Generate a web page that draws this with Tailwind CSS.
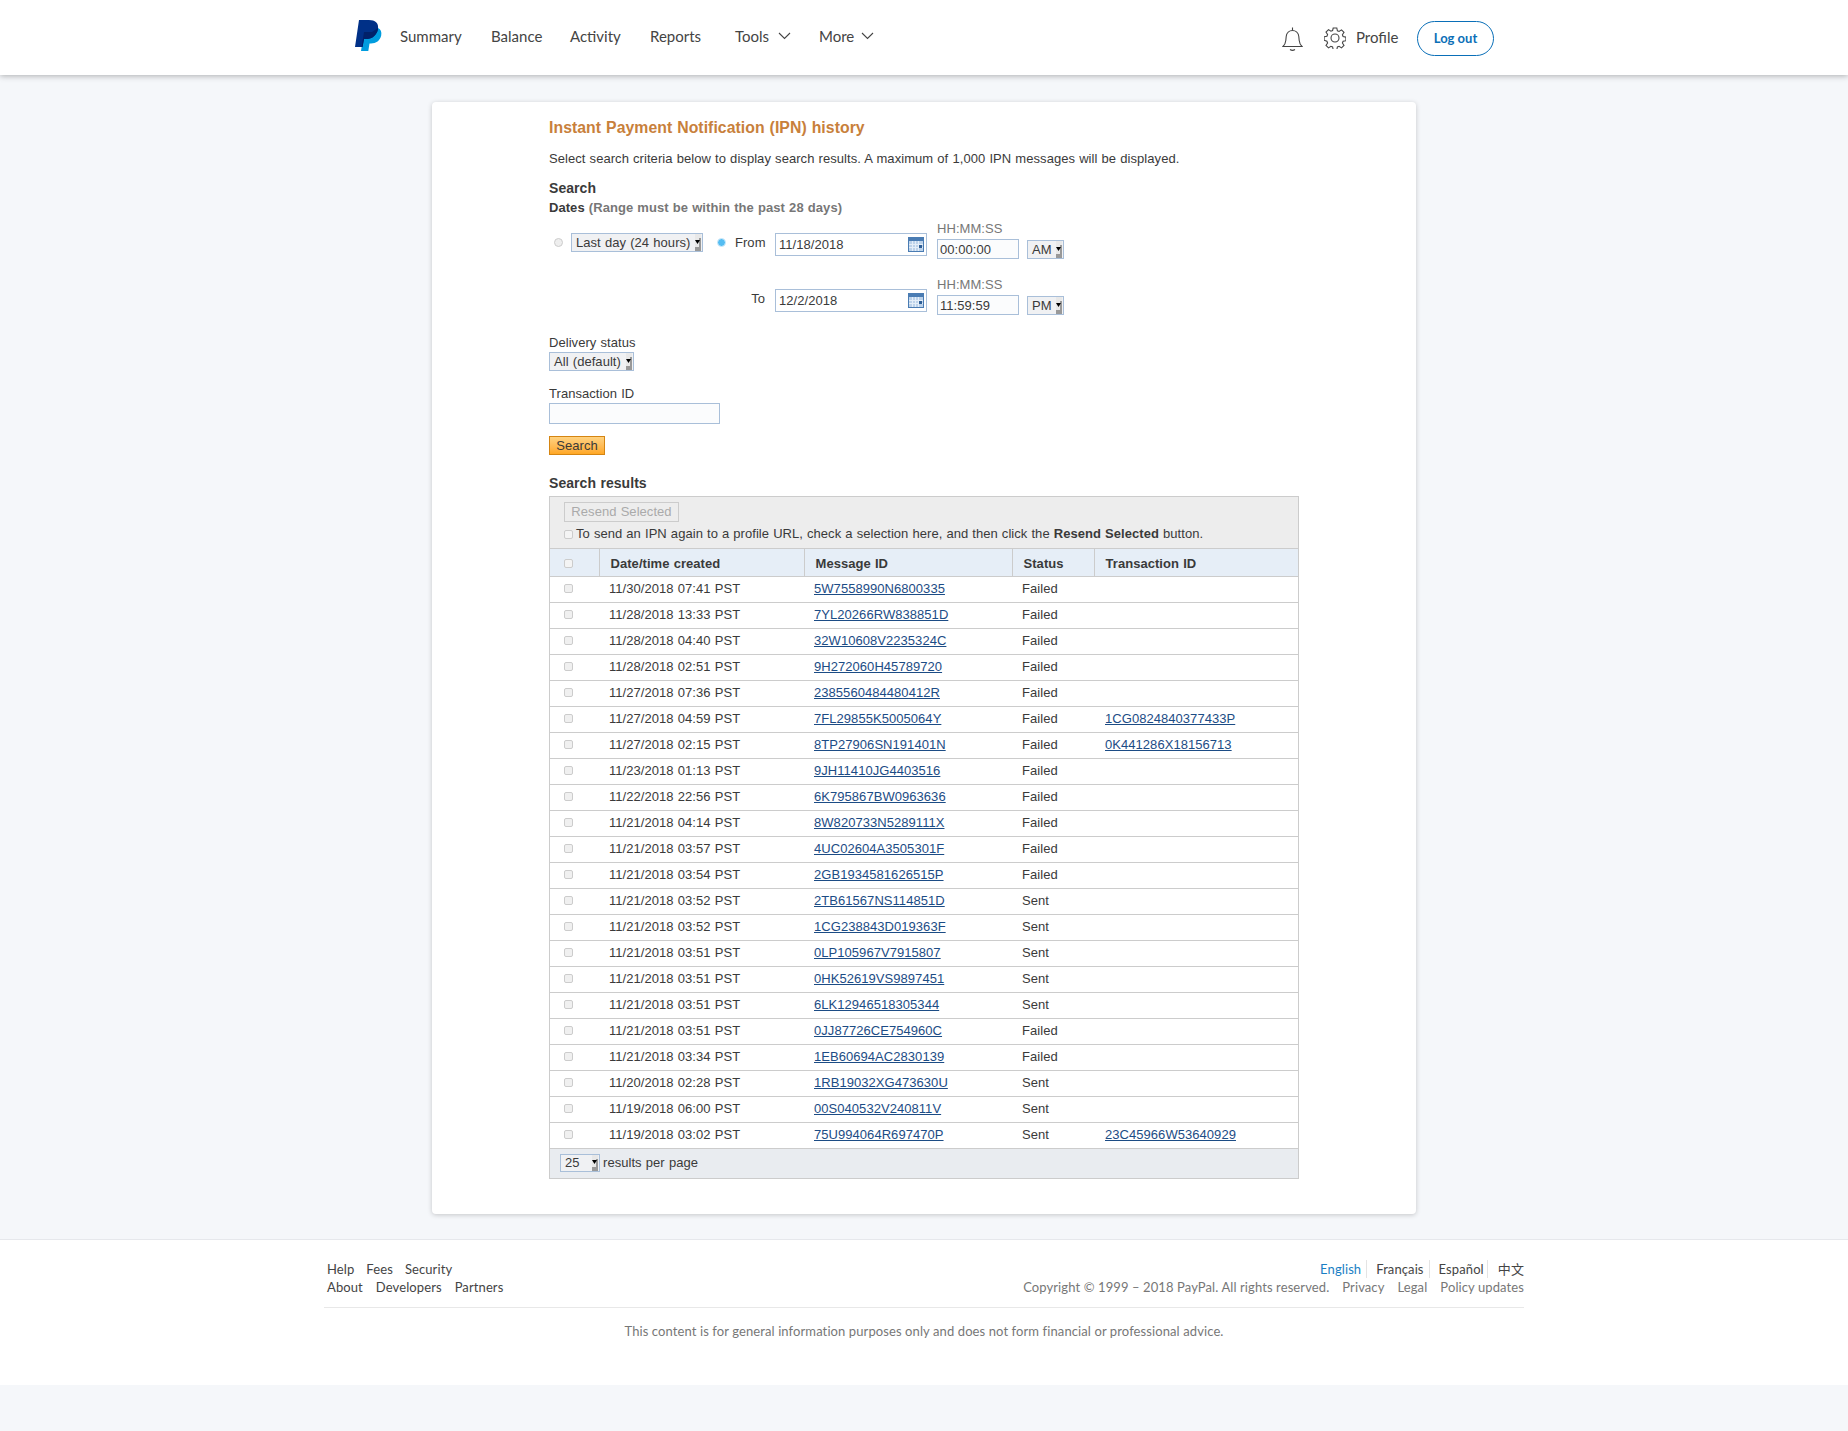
<!DOCTYPE html>
<html lang="en">
<head>
    <meta charset="UTF-8">
    <meta name="viewport" content="width=device-width, initial-scale=1.0">
    <title>Instant Payment Notification (IPN) history</title>
    <script src="https://cdn.jsdelivr.net/npm/@tailwindcss/browser@4"></script>
</head>
<body class="bg-[#f5f7fa] font-['Liberation_Sans',Arial,sans-serif] text-[13px] text-[#3a3a3a] tracking-[0.05px] [word-spacing:0.5px]">
    <!-- top nav -->
    <header class="h-[75px] bg-white shadow-[0_1px_6px_rgba(0,0,0,0.3)] relative font-['Lato',sans-serif] tracking-normal [word-spacing:0]">
        <div class="w-[1200px] mx-auto h-full flex items-center text-[15px] leading-5 text-[#444]">
            <svg class="ml-[31px] mb-[5px] w-[27px] h-[31px]" viewBox="0 0 27 31">
                <defs><clipPath id="pp"><path d="M4 0H14C20 0 24 3 23 9C22 15 17 19 12 19H9L7.5 27H0Z"/></clipPath></defs>
                <path fill="#009cde" d="M23 8C26 9.500 26.800 12 26.200 15.500C25.200 20.500 21 23.500 16 23.500H14.500L13.300 31H6L9 12H17Z"/>
                <path fill="#003087" d="M4 0H14C20 0 24 3 23 9C22 15 17 19 12 19H9L7.500 27H0Z"/>
                <path fill="#012169" clip-path="url(#pp)" d="M23 8C26 9.500 26.800 12 26.200 15.500C25.200 20.500 21 23.500 16 23.500H14.500L13.300 31H6L9 12H17Z"/>
            </svg>
            <nav class="flex items-center ml-[18px] mb-[4px]">
                <a class="w-[91px]">Summary</a>
                <a class="w-[79px]">Balance</a>
                <a class="w-[80px]">Activity</a>
                <a class="w-[85px]">Reports</a>
                <a class="w-[84px] flex items-center"><span class="w-[43px]">Tools</span>
                    <svg class="w-[13px] h-[8px]" viewBox="0 0 13 8" fill="none" stroke="#444" stroke-width="1.100"><path d="M1 1l5.500 5.500L12 1"/></svg>
                </a>
                <a class="flex items-center"><span class="w-[42px]">More</span>
                    <svg class="w-[13px] h-[8px]" viewBox="0 0 13 8" fill="none" stroke="#444" stroke-width="1.100"><path d="M1 1l5.500 5.500L12 1"/></svg>
                </a>
            </nav>
            <div class="ml-auto flex items-center mr-[30px]">
                <svg class="w-[21px] h-[24px] mt-[2px]" viewBox="0 0 21 24" fill="none" stroke="#444" stroke-width="1.100">
                    <path d="M10.500 0.500V3M1 19.500c1.500-1.500 2.500-3 2.800-6l.4-4c.4-3.500 3-6 6.300-6s5.900 2.500 6.300 6l.4 4c.3 3 1.300 4.500 2.800 6z"/>
                    <path d="M8 22.500c1.500 1 3.500 1 5 0"/>
                </svg>
                <svg class="ml-[21px] w-[22px] h-[22px]" viewBox="0 0 22 22" fill="none" stroke="#444" stroke-width="1.100">
                    <circle cx="11" cy="11" r="4"/>
                    <path d="M9.200 1h3.600l.6 2.800 1.700.7 2.400-1.600 2.500 2.500-1.600 2.400.7 1.700 2.800.6v3.600l-2.800.6-.7 1.700 1.600 2.400-2.500 2.500-2.400-1.600-1.700.7-.6 2.800H9.200l-.6-2.800-1.700-.7-2.400 1.600-2.500-2.500 1.600-2.400-.7-1.700L.1 13.200V9.800l2.800-.6.700-1.700L2 5.100l2.500-2.500 2.400 1.600 1.700-.7z"/>
                </svg>
                <a class="ml-[10px] w-[44px] mb-[2px]">Profile</a>
                <a class="ml-[17px] w-[77px] h-[35px] pb-[1px] rounded-full border border-[#0a6fb8] text-[#0b6fb7] text-[13px] font-bold flex items-center justify-center mt-[2px]">Log out</a>
            </div>
        </div>
    </header>

    <main class="w-[984px] mx-auto mt-[27px] bg-white rounded-[4px] shadow-[0_1px_5px_rgba(0,0,0,0.2)] pl-[117px] pt-[16px] pb-[35px]">
        <div class="w-[750px]">
            <h1 class="text-[15.800px] leading-5 font-bold text-[#c8803b]">Instant Payment Notification (IPN) history</h1>
            <p class="mt-[13px] leading-4">Select search criteria below to display search results. A maximum of 1,000 IPN messages will be displayed.</p>
            <h2 class="mt-[13px] text-[14px] leading-4 font-bold">Search</h2>
            <p class="mt-[4px] leading-4 font-bold">Dates <span class="text-[#777]">(Range must be within the past 28 days)</span></p>

            <!-- from row -->
            <div class="mt-[6px] flex items-start">
                <div class="w-[217px] mt-[11px] flex items-center">
                    <span class="ml-[5px] w-[9px] h-[9px] rounded-full border border-[#ccc] bg-[#eee]"></span>
                    <div class="ml-[8px] w-[132px] h-[19px] pl-[4px] pr-[1px] flex items-center justify-between border border-[#a9bfd9] bg-[#f0f1f3]">
                        <span>Last day (24 hours)</span>
                        <svg class="w-[6px] h-[17px]" viewBox="0 0 6 17"><rect width="6" height="17" fill="#e8e8e8"/><rect x="4" y="4" width="2" height="13" fill="#999"/><rect y="13" width="6" height="4" fill="#999"/><path d="M0 6h5L2.500 10z" fill="#000"/></svg>
                    </div>
                    <span class="ml-[14px] w-[9px] h-[9px] rounded-full bg-[#55bdf2] border border-[#d3ecfb]"></span>
                    <span class="ml-[9px]">From</span>
                </div>
                <div class="ml-[9px] mt-[11px] w-[152px] h-[23px] pl-[3px] pr-[2px] flex items-center justify-between border border-[#a9bfd9] bg-white">
                    <span class="mt-[1px]">11/18/2018</span>
                    <svg class="w-[16px] h-[15px]" viewBox="0 0 16 15"><rect width="16" height="15" fill="#4a7cb3"/><rect x="1" y="4" width="14" height="10" fill="#bcd2ea"/><path d="M1 7.500h14M1 10.500h14M4.500 4v10M7.500 4v10M10.500 4v10" stroke="#e4eef8"/><rect x="11" y="8" width="3" height="3" fill="#2f5f96"/></svg>
                </div>
                <div class="ml-[10px] w-[82px]">
                    <div class="leading-[14px] text-[#777]">HH:MM:SS</div>
                    <div class="mt-[3px] h-[20px] pl-[2px] pt-[1px] flex items-center border border-[#a9bfd9] bg-[#fbfcfd]">00:00:00</div>
                </div>
                <div class="ml-[8px] mt-[18px] w-[37px] h-[19px] pl-[4px] pr-[1px] flex items-center justify-between border border-[#a9bfd9] bg-[#f0f1f3]">
                    <span>AM</span>
                    <svg class="w-[6px] h-[17px]" viewBox="0 0 6 17"><rect width="6" height="17" fill="#e8e8e8"/><rect x="4" y="4" width="2" height="13" fill="#999"/><rect y="13" width="6" height="4" fill="#999"/><path d="M0 6h5L2.500 10z" fill="#000"/></svg>
                </div>
            </div>

            <!-- to row -->
            <div class="mt-[19px] flex items-start">
                <div class="w-[216px] mr-[1px] mt-[11px] h-[19px] leading-[19px] text-right">To</div>
                <div class="ml-[9px] mt-[11px] w-[152px] h-[23px] pl-[3px] pr-[2px] flex items-center justify-between border border-[#a9bfd9] bg-white">
                    <span class="mt-[1px]">12/2/2018</span>
                    <svg class="w-[16px] h-[15px]" viewBox="0 0 16 15"><rect width="16" height="15" fill="#4a7cb3"/><rect x="1" y="4" width="14" height="10" fill="#bcd2ea"/><path d="M1 7.500h14M1 10.500h14M4.500 4v10M7.500 4v10M10.500 4v10" stroke="#e4eef8"/><rect x="11" y="8" width="3" height="3" fill="#2f5f96"/></svg>
                </div>
                <div class="ml-[10px] w-[82px]">
                    <div class="leading-[14px] text-[#777]">HH:MM:SS</div>
                    <div class="mt-[3px] h-[20px] pl-[2px] pt-[1px] flex items-center border border-[#a9bfd9] bg-[#fbfcfd]">11:59:59</div>
                </div>
                <div class="ml-[8px] mt-[18px] w-[37px] h-[19px] pl-[4px] pr-[1px] flex items-center justify-between border border-[#a9bfd9] bg-[#f0f1f3]">
                    <span>PM</span>
                    <svg class="w-[6px] h-[17px]" viewBox="0 0 6 17"><rect width="6" height="17" fill="#e8e8e8"/><rect x="4" y="4" width="2" height="13" fill="#999"/><rect y="13" width="6" height="4" fill="#999"/><path d="M0 6h5L2.500 10z" fill="#000"/></svg>
                </div>
            </div>

            <div class="mt-[20px] leading-4">Delivery status</div>
            <div class="mt-[1px] w-[85px] h-[19px] pl-[4px] pr-[1px] flex items-center justify-between border border-[#a9bfd9] bg-[#f0f1f3]">
                <span>All (default)</span>
                <svg class="w-[6px] h-[17px]" viewBox="0 0 6 17"><rect width="6" height="17" fill="#e8e8e8"/><rect x="4" y="4" width="2" height="13" fill="#999"/><rect y="13" width="6" height="4" fill="#999"/><path d="M0 6h5L2.500 10z" fill="#000"/></svg>
            </div>

            <div class="mt-[15px] leading-4">Transaction ID</div>
            <div class="mt-[1px] w-[171px] h-[21px] border border-[#a9bfd9] bg-[#fbfcfd]"></div>

            <button class="mt-[12px] block w-[56px] h-[19px] border border-[#d58512] bg-gradient-to-b from-[#ffd27f] to-[#ffa822] text-center leading-[17px]">Search</button>

            <h2 class="mt-[20px] text-[14px] leading-4 font-bold">Search results</h2>

            <!-- results -->
            <div class="mt-[5px] border border-[#ccc]">
                <div class="h-[52px] bg-[#ededed] border-b border-[#ccc] pl-[14px] pt-[5px]">
                    <div class="w-[115px] h-[20px] border border-[#ccc] text-[#aaa] text-center leading-[18px]">Resend Selected</div>
                    <div class="mt-[4px] flex items-center h-[16px]">
                        <span class="w-[9px] h-[9px] rounded-[2px] border border-[#ccc] bg-[#f4f4f4]"></span>
                        <span class="ml-[3px] [word-spacing:0.4px]">To send an IPN again to a profile URL, check a selection here, and then click the <b>Resend Selected</b> button.</span>
                    </div>
                </div>
                <table class="w-[748px] table-fixed border-collapse">
                    <colgroup><col class="w-[49px]"><col class="w-[205px]"><col class="w-[208px]"><col class="w-[82px]"><col class="w-[204px]"></colgroup>
                    <thead class="bg-[#e6eef7] font-bold text-left">
                        <tr class="h-[27px] border-b border-[#ccc] [&>th]:pl-[11px] [&>th]:pt-[3px] [&>th:not(:first-child)]:border-l [&>th]:border-[#ccc] [&>th:last-child]:border-r">
                            <th><span class="block ml-[3px] w-[9px] h-[9px] rounded-[2px] border border-[#ccc] bg-[#f4f4f4]"></span></th>
                            <th>Date/time created</th>
                            <th>Message ID</th>
                            <th>Status</th>
                            <th>Transaction ID</th>
                        </tr>
                    </thead>
                    <tbody class="[&_tr]:h-[26px] [&_tr]:border-b [&_tr]:border-[#ccc] [&_td]:pl-[10px] [&_td:last-child]:pl-[11px] [&_a]:text-[#1c4c85] [&_a]:underline [&_i]:block [&_i]:ml-[4px] [&_i]:mb-[1px] [&_i]:w-[9px] [&_i]:h-[9px] [&_i]:rounded-[2px] [&_i]:border [&_i]:border-[#ccc] [&_i]:bg-[#f0f0f0]">
                        <tr><td><i></i></td><td>11/30/2018 07:41 PST</td><td><a>5W7558990N6800335</a></td><td>Failed</td><td></td></tr>
                        <tr><td><i></i></td><td>11/28/2018 13:33 PST</td><td><a>7YL20266RW838851D</a></td><td>Failed</td><td></td></tr>
                        <tr><td><i></i></td><td>11/28/2018 04:40 PST</td><td><a>32W10608V2235324C</a></td><td>Failed</td><td></td></tr>
                        <tr><td><i></i></td><td>11/28/2018 02:51 PST</td><td><a>9H272060H45789720</a></td><td>Failed</td><td></td></tr>
                        <tr><td><i></i></td><td>11/27/2018 07:36 PST</td><td><a>2385560484480412R</a></td><td>Failed</td><td></td></tr>
                        <tr><td><i></i></td><td>11/27/2018 04:59 PST</td><td><a>7FL29855K5005064Y</a></td><td>Failed</td><td><a>1CG0824840377433P</a></td></tr>
                        <tr><td><i></i></td><td>11/27/2018 02:15 PST</td><td><a>8TP27906SN191401N</a></td><td>Failed</td><td><a>0K441286X18156713</a></td></tr>
                        <tr><td><i></i></td><td>11/23/2018 01:13 PST</td><td><a>9JH11410JG4403516</a></td><td>Failed</td><td></td></tr>
                        <tr><td><i></i></td><td>11/22/2018 22:56 PST</td><td><a>6K795867BW0963636</a></td><td>Failed</td><td></td></tr>
                        <tr><td><i></i></td><td>11/21/2018 04:14 PST</td><td><a>8W820733N5289111X</a></td><td>Failed</td><td></td></tr>
                        <tr><td><i></i></td><td>11/21/2018 03:57 PST</td><td><a>4UC02604A3505301F</a></td><td>Failed</td><td></td></tr>
                        <tr><td><i></i></td><td>11/21/2018 03:54 PST</td><td><a>2GB1934581626515P</a></td><td>Failed</td><td></td></tr>
                        <tr><td><i></i></td><td>11/21/2018 03:52 PST</td><td><a>2TB61567NS114851D</a></td><td>Sent</td><td></td></tr>
                        <tr><td><i></i></td><td>11/21/2018 03:52 PST</td><td><a>1CG238843D019363F</a></td><td>Sent</td><td></td></tr>
                        <tr><td><i></i></td><td>11/21/2018 03:51 PST</td><td><a>0LP105967V7915807</a></td><td>Sent</td><td></td></tr>
                        <tr><td><i></i></td><td>11/21/2018 03:51 PST</td><td><a>0HK52619VS9897451</a></td><td>Sent</td><td></td></tr>
                        <tr><td><i></i></td><td>11/21/2018 03:51 PST</td><td><a>6LK12946518305344</a></td><td>Sent</td><td></td></tr>
                        <tr><td><i></i></td><td>11/21/2018 03:51 PST</td><td><a>0JJ87726CE754960C</a></td><td>Failed</td><td></td></tr>
                        <tr><td><i></i></td><td>11/21/2018 03:34 PST</td><td><a>1EB60694AC2830139</a></td><td>Failed</td><td></td></tr>
                        <tr><td><i></i></td><td>11/20/2018 02:28 PST</td><td><a>1RB19032XG473630U</a></td><td>Sent</td><td></td></tr>
                        <tr><td><i></i></td><td>11/19/2018 06:00 PST</td><td><a>00S040532V240811V</a></td><td>Sent</td><td></td></tr>
                        <tr><td><i></i></td><td>11/19/2018 03:02 PST</td><td><a>75U994064R697470P</a></td><td>Sent</td><td><a>23C45966W53640929</a></td></tr>
                    </tbody>
                </table>
                <div class="h-[29px] bg-[#e9ecf0] pl-[10px] flex items-center">
                    <div class="w-[40px] h-[18px] pl-[4px] pr-[1px] flex items-center justify-between border border-[#a9bfd9] bg-[#f0f1f3]">
                        <span>25</span>
                        <svg class="w-[6px] h-[16px]" viewBox="0 0 6 16"><rect width="6" height="16" fill="#e8e8e8"/><rect x="4" y="4" width="2" height="12" fill="#999"/><rect y="12" width="6" height="4" fill="#999"/><path d="M0 5h5L2.500 9z" fill="#000"/></svg>
                    </div>
                    <span class="ml-[3px]">results per page</span>
                </div>
            </div>
        </div>
    </main>

    <footer class="mt-[25px] h-[146px] bg-white border-t border-[#e6e8ec] font-['Lato','Noto_Sans_CJK_SC',sans-serif] text-[13px] leading-[18px] tracking-[0.1px] [word-spacing:0]">
        <div class="w-[1200px] mx-auto">
            <div class="pt-[20px] h-[68px] border-b border-[#e8e8e8] flex justify-between">
                <div class="pl-[3px] text-[#444]">
                    <div class="flex gap-[12px]"><a>Help</a><a>Fees</a><a>Security</a></div>
                    <div class="flex gap-[13px]"><a>About</a><a>Developers</a><a>Partners</a></div>
                </div>
                <div class="text-right">
                    <div class="flex justify-end text-[#444]">
                        <a class="text-[#1a7fc4] pr-[5px] border-r border-[#e4e4e4]">English</a>
                        <a class="pl-[9px] pr-[5px] border-r border-[#e4e4e4]">Français</a>
                        <a class="pl-[9px] pr-[3px] border-r border-[#e4e4e4]">Español</a>
                        <a class="pl-[10px]">中文</a>
                    </div>
                    <div class="flex justify-end gap-[13px] text-[#777]">
                        <span>Copyright © 1999 – 2018 PayPal. All rights reserved.</span><a>Privacy</a><a>Legal</a><a>Policy updates</a>
                    </div>
                </div>
            </div>
            <p class="mt-[14px] text-center text-[#777]">This content is for general information purposes only and does not form financial or professional advice.</p>
        </div>
    </footer>
</body>
</html>
